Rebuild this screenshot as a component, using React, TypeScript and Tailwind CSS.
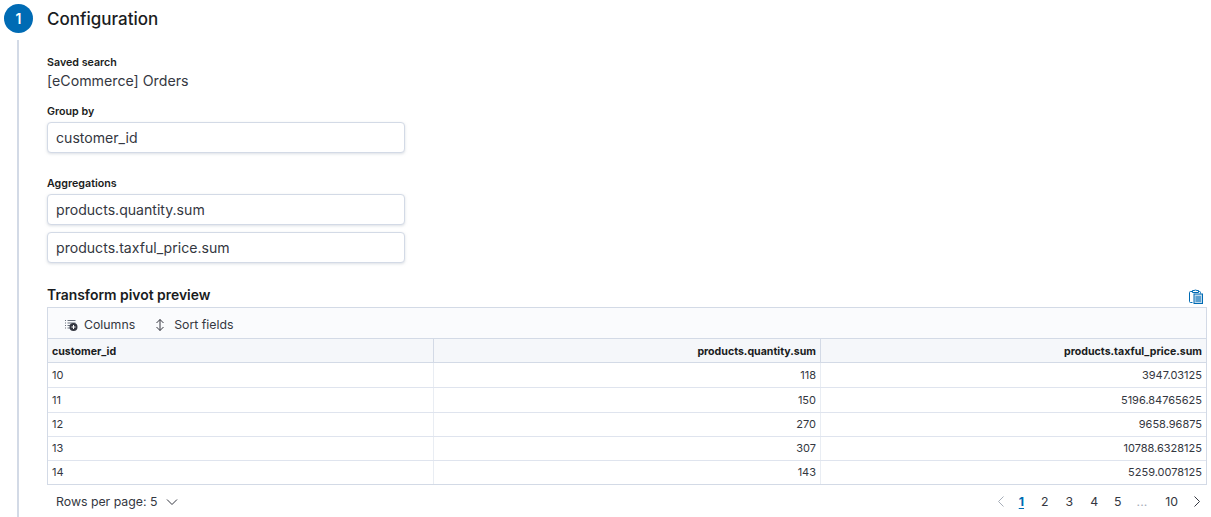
import React from "react";

const rows = [
  ["10", "118", "3947.03125"],
  ["11", "150", "5196.84765625"],
  ["12", "270", "9658.96875"],
  ["13", "307", "10788.6328125"],
  ["14", "143", "5259.0078125"],
];

function Field({ value }: { value: string }) {
  return (
    <div className="flex h-[31px] w-[358px] items-center rounded-[4px] border border-[#d3dae6] bg-white pl-2 text-[14.1px] text-[#343741] shadow-[0_1px_3px_rgba(152,162,179,0.35)]">
      {value}
    </div>
  );
}

function Label({ children }: { children: React.ReactNode }) {
  return <div className="text-[10.7px] leading-[16px] font-semibold text-[#1a1c21]">{children}</div>;
}

export default function App() {
  return (
    <div className="h-[517px] w-[1211px] overflow-hidden bg-white font-['Inter','Liberation_Sans',sans-serif] text-[#343741]">
      {/* step header */}
      <div className="flex items-center pt-1 pl-1">
        <div className="flex h-[29px] w-[29px] items-center justify-center rounded-full bg-[#006bb4] text-[14px] font-semibold text-white">
          1
        </div>
        <h2 className="ml-[14px] h-[29px] text-[17px] leading-[31px] font-medium text-[#1a1c21]">Configuration</h2>
      </div>

      <div className="mt-[7px] ml-[17px] h-[477px] border-l-2 border-[#d3dae6] pl-[28px]">
        <div className="pt-[15px]">
          <Label>Saved search</Label>
          <div className="text-[14.2px] leading-[20px]">[eCommerce] Orders</div>
        </div>

        <div className="mt-[13px]">
          <Label>Group by</Label>
          <div className="mt-[2px]">
            <Field value="customer_id" />
          </div>
        </div>

        <div className="mt-[23px]">
          <Label>Aggregations</Label>
          <div className="mt-[2px] flex flex-col gap-[7px]">
            <Field value="products.quantity.sum" />
            <Field value="products.taxful_price.sum" />
          </div>
        </div>

        <div className="mt-[22px] mb-[2px] flex w-[1159px] items-center justify-between pr-[3px]">
          <h3 className="text-[13.9px] leading-[20px] font-semibold text-[#1a1c21]">Transform pivot preview</h3>
          <svg className="mt-[2px]" width="14" height="15" viewBox="0 0 14 15" fill="none" stroke="#006bb4" strokeWidth="1">
            <path d="M3.5 13.5h-2a1 1 0 0 1-1-1v-9a1 1 0 0 1 1-1h2" />
            <path d="M9.5 2.5h1a1 1 0 0 1 1 1v1" />
            <path d="M3.5 3.5v-2h1.5a2 1 0 0 1 3 0h1.5v2z" />
            <rect x="5" y="5" width="8.5" height="9.5" fill="#bcd8ec" stroke="#006bb4" />
            <path d="M6.5 8h5.5M6.5 10h5.5M6.5 12h5.5" />
          </svg>
        </div>

        {/* data grid */}
        <div className="w-[1160px] border border-[#d3dae6] text-[11px] text-[#343741]">
          <div className="flex h-[30px] items-center bg-[#fafbfd] pt-[4px] pl-[16px] text-[12.3px]">
            <span className="flex items-center gap-[6px]">
              <svg width="14" height="12" viewBox="0 0 14 12" fill="none">
                <path d="M1 1.5h1M1 4h1M1 6.5h1M1 9h1M3.5 1.5h8M3.5 4h8M3.5 6.5h3M3.5 9h3" stroke="#69707d" />
                <circle cx="9.5" cy="8" r="4" fill="#343741" />
                <path d="M7.5 8h4M9.5 6v4" stroke="#fff" />
              </svg>
              Columns
            </span>
            <span className="ml-[20px] flex items-center gap-[9px]">
              <svg width="10" height="12" viewBox="0 0 10 12" fill="none" stroke="#343741" strokeWidth="1">
                <path d="M5 .5v11M1.5 4 5 .5 8.5 4M1.5 8 5 11.5 8.5 8" />
              </svg>
              Sort fields
            </span>
          </div>
          <div className="flex h-[25px] items-center border-t border-b border-[#d3dae6] bg-[#f5f7fa] text-[10.6px] font-bold text-[#1a1c21]">
            <div className="w-[385px] pt-[2px] pl-1">customer_id</div>
            <div className="flex h-full w-[387px] items-center justify-end border-l border-[#d3dae6] pt-[2px] pr-1">products.quantity.sum</div>
            <div className="flex h-full flex-1 items-center justify-end border-l border-[#d3dae6] pt-[2px] pr-1">products.taxful_price.sum</div>
          </div>
          {rows.map((r, i) => (
            <div
              key={r[0]}
              className={`flex items-center ${i > 0 ? "border-t border-[#dfe4ee]" : ""} ${i === 4 ? "h-[23.8px]" : "h-[24.3px]"}`}
            >
              <div className="w-[385px] pl-1">{r[0]}</div>
              <div className="flex h-full w-[387px] items-center justify-end border-l border-[#e9edf3] pr-1">{r[1]}</div>
              <div className="flex h-full flex-1 items-center justify-end border-l border-[#e9edf3] pr-1">{r[2]}</div>
            </div>
          ))}
        </div>

        {/* pagination */}
        <div className="flex w-[1160px] items-center justify-between pt-[9px] text-[12.3px] leading-[16px]">
          <div className="flex items-center pl-[9px]">
            Rows per page: 5
            <svg className="ml-[9px]" width="12" height="8" viewBox="0 0 12 8" fill="none" stroke="#343741">
              <path d="M1 1.5 6 6.5 11 1.5" />
            </svg>
          </div>
          <div className="flex items-center pr-[6px]">
            <svg width="8" height="11" viewBox="0 0 8 11" fill="none" stroke="#a6adb8">
              <path d="M6.5 .5 1.5 5.5 6.5 10.5" />
            </svg>
            <span className="ml-[14px] font-bold text-[#006bb4] underline underline-offset-2">1</span>
            <span className="ml-[17px]">2</span>
            <span className="ml-[17px]">3</span>
            <span className="ml-[17px]">4</span>
            <span className="ml-[16px]">5</span>
            <span className="ml-[15px] text-[#a6adb8]">...</span>
            <span className="ml-[18px]">10</span>
            <svg className="ml-[15px]" width="8" height="11" viewBox="0 0 8 11" fill="none" stroke="#343741">
              <path d="M1.5 .5 6.5 5.5 1.5 10.5" />
            </svg>
          </div>
        </div>
      </div>
    </div>
  );
}
